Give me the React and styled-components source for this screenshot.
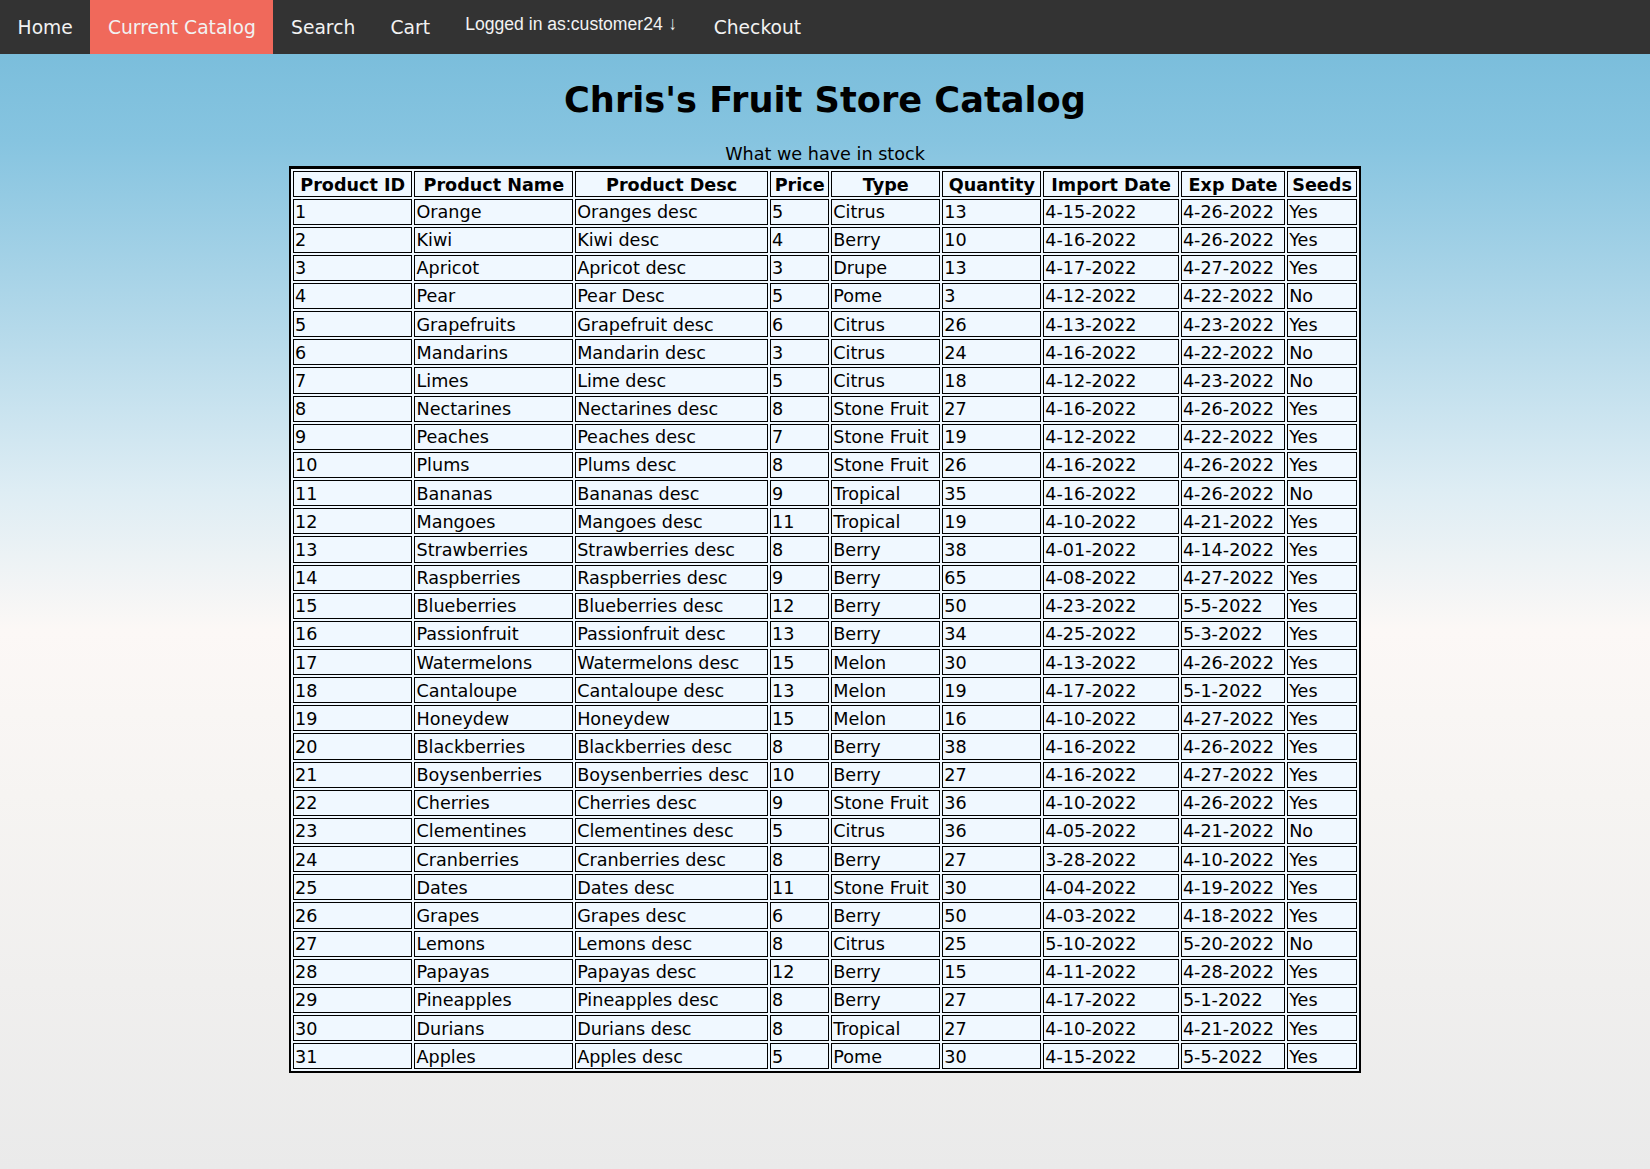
import styled, { createGlobalStyle } from 'styled-components';

const GlobalStyle = createGlobalStyle`
  html,
  body {
    margin: 0;
    padding: 0;
  }
  body {
    background: linear-gradient(
      180deg,
      #74bad9 0%,
      #86c4e0 12%,
      #b4d9ea 28%,
      #deedf4 42%,
      #fcf8f6 54%,
      #f6f4f2 68%,
      #eaeaea 100%
    );
    min-height: 100vh;
    font-family: 'DejaVu Sans', Verdana, sans-serif;
    font-size: 17.6px;
    color: #000;
  }
`;

const TopNav = styled.nav`
  background-color: #333;
  display: flex;
  align-items: stretch;
  height: 54px;
  overflow: hidden;
`;

const NavLink = styled.a`
  color: #f2f2f2;
  background-color: ${(p) => (p.$active ? '#f0695b' : 'transparent')};
  display: block;
  font-size: 18.7px;
  line-height: 23.2px;
  padding: 16px 17.6px 14.8px;
  text-decoration: none;
  cursor: pointer;
`;

const DropButton = styled.button`
  background: transparent;
  border: none;
  color: #f2f2f2;
  font-family: 'Liberation Sans', Arial, sans-serif;
  font-size: 17.6px;
  line-height: 20px;
  padding: 14px 19px 20px 17.6px;
  cursor: pointer;
`;

const Arrow = styled.span`
  display: inline-block;
  font-size: 19px;
  transform: scaleX(0.85);
`;

const Title = styled.h1`
  font-size: 35.2px;
  font-weight: bold;
  line-height: 44px;
  margin: 24px 0 22px;
  text-align: center;
`;

const Table = styled.table`
  background-color: #f0f8ff;
  border: 2px solid #000;
  border-top-width: 3px;
  border-spacing: 2px;
  margin: 0 auto;
  width: 1072px;
`;

const Caption = styled.caption`
  line-height: 21.5px;
  background: transparent;
`;

const Head = styled.th`
  border: 1px solid #000;
  padding: 2px 1px 0;
  line-height: 22px;
  font-weight: bold;
  text-align: center;
  white-space: nowrap;
`;

const Cell = styled.td`
  border: 1px solid #000;
  padding: 2.5px 1px 0;
  line-height: 21.65px;
  text-align: left;
  white-space: nowrap;
`;

const columns = [
  'Product ID',
  'Product Name',
  'Product Desc',
  'Price',
  'Type',
  'Quantity',
  'Import Date',
  'Exp Date',
  'Seeds',
];

const products = [
  [1, 'Orange', 'Oranges desc', 5, 'Citrus', 13, '4-15-2022', '4-26-2022', 'Yes'],
  [2, 'Kiwi', 'Kiwi desc', 4, 'Berry', 10, '4-16-2022', '4-26-2022', 'Yes'],
  [3, 'Apricot', 'Apricot desc', 3, 'Drupe', 13, '4-17-2022', '4-27-2022', 'Yes'],
  [4, 'Pear', 'Pear Desc', 5, 'Pome', 3, '4-12-2022', '4-22-2022', 'No'],
  [5, 'Grapefruits', 'Grapefruit desc', 6, 'Citrus', 26, '4-13-2022', '4-23-2022', 'Yes'],
  [6, 'Mandarins', 'Mandarin desc', 3, 'Citrus', 24, '4-16-2022', '4-22-2022', 'No'],
  [7, 'Limes', 'Lime desc', 5, 'Citrus', 18, '4-12-2022', '4-23-2022', 'No'],
  [8, 'Nectarines', 'Nectarines desc', 8, 'Stone Fruit', 27, '4-16-2022', '4-26-2022', 'Yes'],
  [9, 'Peaches', 'Peaches desc', 7, 'Stone Fruit', 19, '4-12-2022', '4-22-2022', 'Yes'],
  [10, 'Plums', 'Plums desc', 8, 'Stone Fruit', 26, '4-16-2022', '4-26-2022', 'Yes'],
  [11, 'Bananas', 'Bananas desc', 9, 'Tropical', 35, '4-16-2022', '4-26-2022', 'No'],
  [12, 'Mangoes', 'Mangoes desc', 11, 'Tropical', 19, '4-10-2022', '4-21-2022', 'Yes'],
  [13, 'Strawberries', 'Strawberries desc', 8, 'Berry', 38, '4-01-2022', '4-14-2022', 'Yes'],
  [14, 'Raspberries', 'Raspberries desc', 9, 'Berry', 65, '4-08-2022', '4-27-2022', 'Yes'],
  [15, 'Blueberries', 'Blueberries desc', 12, 'Berry', 50, '4-23-2022', '5-5-2022', 'Yes'],
  [16, 'Passionfruit', 'Passionfruit desc', 13, 'Berry', 34, '4-25-2022', '5-3-2022', 'Yes'],
  [17, 'Watermelons', 'Watermelons desc', 15, 'Melon', 30, '4-13-2022', '4-26-2022', 'Yes'],
  [18, 'Cantaloupe', 'Cantaloupe desc', 13, 'Melon', 19, '4-17-2022', '5-1-2022', 'Yes'],
  [19, 'Honeydew', 'Honeydew', 15, 'Melon', 16, '4-10-2022', '4-27-2022', 'Yes'],
  [20, 'Blackberries', 'Blackberries desc', 8, 'Berry', 38, '4-16-2022', '4-26-2022', 'Yes'],
  [21, 'Boysenberries', 'Boysenberries desc', 10, 'Berry', 27, '4-16-2022', '4-27-2022', 'Yes'],
  [22, 'Cherries', 'Cherries desc', 9, 'Stone Fruit', 36, '4-10-2022', '4-26-2022', 'Yes'],
  [23, 'Clementines', 'Clementines desc', 5, 'Citrus', 36, '4-05-2022', '4-21-2022', 'No'],
  [24, 'Cranberries', 'Cranberries desc', 8, 'Berry', 27, '3-28-2022', '4-10-2022', 'Yes'],
  [25, 'Dates', 'Dates desc', 11, 'Stone Fruit', 30, '4-04-2022', '4-19-2022', 'Yes'],
  [26, 'Grapes', 'Grapes desc', 6, 'Berry', 50, '4-03-2022', '4-18-2022', 'Yes'],
  [27, 'Lemons', 'Lemons desc', 8, 'Citrus', 25, '5-10-2022', '5-20-2022', 'No'],
  [28, 'Papayas', 'Papayas desc', 12, 'Berry', 15, '4-11-2022', '4-28-2022', 'Yes'],
  [29, 'Pineapples', 'Pineapples desc', 8, 'Berry', 27, '4-17-2022', '5-1-2022', 'Yes'],
  [30, 'Durians', 'Durians desc', 8, 'Tropical', 27, '4-10-2022', '4-21-2022', 'Yes'],
  [31, 'Apples', 'Apples desc', 5, 'Pome', 30, '4-15-2022', '5-5-2022', 'Yes'],
];

const App = () => {
  return (
    <>
      <GlobalStyle />
      <TopNav>
        <NavLink>Home</NavLink>
        <NavLink $active>Current Catalog</NavLink>
        <NavLink>Search</NavLink>
        <NavLink>Cart</NavLink>
        <DropButton>
          Logged in as:customer24 <Arrow>↓</Arrow>
        </DropButton>
        <NavLink>Checkout</NavLink>
      </TopNav>
      <Title>Chris's Fruit Store Catalog</Title>
      <Table>
        <Caption>What we have in stock</Caption>
        <thead>
          <tr>
            {columns.map((c) => (
              <Head key={c}>{c}</Head>
            ))}
          </tr>
        </thead>
        <tbody>
          {products.map((row) => (
            <tr key={row[0]}>
              {row.map((v, i) => (
                <Cell key={i}>{v}</Cell>
              ))}
            </tr>
          ))}
        </tbody>
      </Table>
    </>
  );
};

export default App;
